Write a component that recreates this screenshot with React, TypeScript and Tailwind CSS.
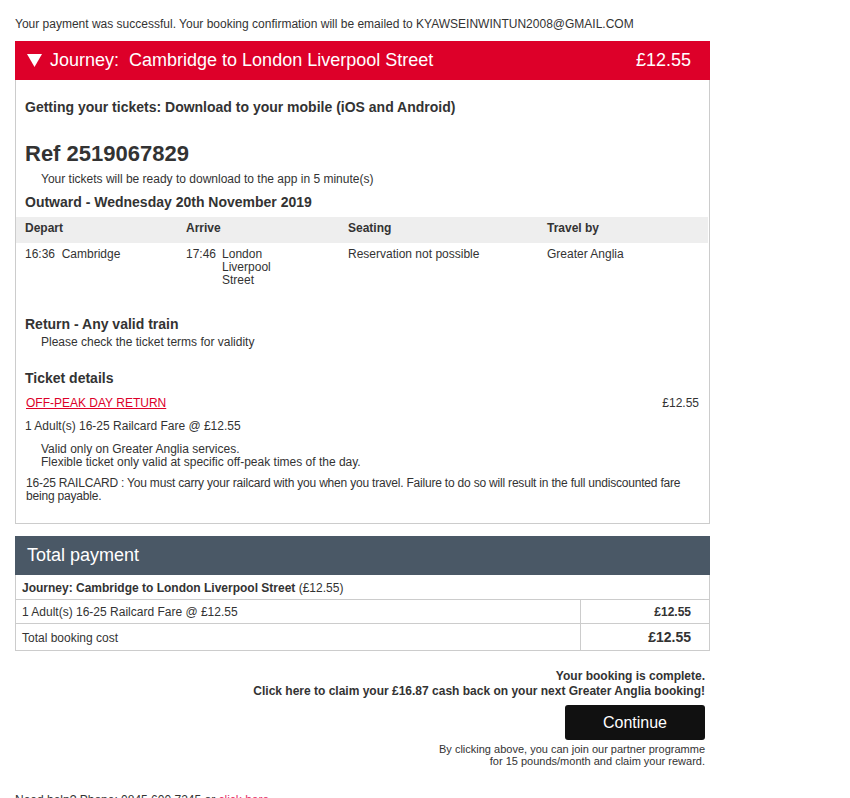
export default function App() {
  return (
    <div className="min-h-[798px] bg-white font-['Liberation_Sans',Arial,sans-serif] text-[#333] pl-[15px] w-[710px]">
      {/* Success notice */}
      <p className="pt-[17px] text-[12px] leading-[14px]">
        Your payment was successful. Your booking confirmation will be emailed to KYAWSEINWINTUN2008@GMAIL.COM
      </p>

      {/* Journey card */}
      <div className="mt-[10px] w-[695px]">
        <div className="h-[39px] bg-[#dd0029] text-white flex items-center justify-between pl-[12px] pr-[19px]">
          <div className="flex items-center gap-[8px]">
            <svg width="15" height="13" viewBox="0 0 15 13">
              <polygon points="0,0 15,0 7.5,13" fill="#fff" />
            </svg>
            <span className="text-[18px]">Journey:&nbsp; Cambridge to London Liverpool Street</span>
          </div>
          <span className="text-[18px]">£12.55</span>
        </div>

        <div className="border border-t-0 border-[#ccc] pb-[20px]">
          <div className="px-[9px]">
            <h3 className="pt-[19px] text-[14px] font-bold leading-[16px]">
              Getting your tickets: Download to your mobile (iOS and Android)
            </h3>
            <h2 className="mt-[26px] text-[22px] font-bold leading-[26px]">Ref 2519067829</h2>
            <p className="mt-[5px] pl-[16px] text-[12px] leading-[14px]">
              Your tickets will be ready to download to the app in 5 minute(s)
            </p>
            <h3 className="mt-[8px] text-[14px] font-bold leading-[16px]">Outward - Wednesday 20th November 2019</h3>
          </div>

          <div className="mt-[7px] mr-[1px]">
            <div className="grid grid-cols-[161px_162px_199px_1fr] bg-[#eee] h-[26px] pt-[4px] pl-[9px] text-[12px] leading-[14px] font-bold">
              <span>Depart</span>
              <span>Arrive</span>
              <span>Seating</span>
              <span>Travel by</span>
            </div>
            <div className="grid grid-cols-[161px_162px_199px_1fr] pl-[9px] pt-[5px] text-[12px] leading-[13px]">
              <span>16:36&nbsp; Cambridge</span>
              <div className="flex gap-[6px]">
                <span>17:46</span>
                <span>
                  London
                  <br />
                  Liverpool
                  <br />
                  Street
                </span>
              </div>
              <span>Reservation not possible</span>
              <span>Greater Anglia</span>
            </div>
          </div>

          <div className="px-[9px]">
            <h3 className="mt-[29px] text-[14px] font-bold leading-[16px]">Return - Any valid train</h3>
            <p className="mt-[3px] pl-[16px] text-[12px] leading-[14px]">Please check the ticket terms for validity</p>

            <h3 className="mt-[21px] text-[14px] font-bold leading-[16px]">Ticket details</h3>
            <div className="mt-[10px] flex justify-between text-[12px] leading-[14px]">
              <a className="pl-[1px] text-[#dd0029] underline">OFF-PEAK DAY RETURN</a>
              <span className="pr-[1px]">£12.55</span>
            </div>
            <p className="mt-[9px] text-[12px] leading-[14px]">1 Adult(s) 16-25 Railcard Fare @ £12.55</p>
            <p className="mt-[10px] pl-[16px] text-[12px] leading-[13px]">
              Valid only on Greater Anglia services.
              <br />
              Flexible ticket only valid at specific off-peak times of the day.
            </p>
            <p className="mt-[8px] pl-[1px] text-[12px] leading-[13px] tracking-[-0.2px]">
              16-25 RAILCARD : You must carry your railcard with you when you travel. Failure to do so will result in the full undiscounted fare being payable.
            </p>
          </div>
        </div>
      </div>

      {/* Total payment */}
      <div className="mt-[12px] w-[695px]">
        <div className="h-[39px] bg-[#4a5866] text-white flex items-center pl-[12px] text-[18px]">Total payment</div>
        <div className="border border-t-0 border-[#ccc] text-[12px]">
          <div className="h-[25px] flex items-center pl-[6px] pt-[1px] border-b border-[#ccc]">
            <span className="font-bold">Journey: Cambridge to London Liverpool Street</span>&nbsp;(£12.55)
          </div>
          <div className="h-[24px] grid grid-cols-[564px_1fr] border-b border-[#ccc]">
            <span className="flex items-center pl-[6px] pt-[1px]">1 Adult(s) 16-25 Railcard Fare @ £12.55</span>
            <span className="flex items-center justify-end pr-[18px] pt-[1px] border-l border-[#ccc] font-bold">£12.55</span>
          </div>
          <div className="h-[26px] grid grid-cols-[564px_1fr]">
            <span className="flex items-center pl-[6px] pt-[1px]">Total booking cost</span>
            <span className="flex items-center justify-end pr-[18px] pt-[1px] border-l border-[#ccc] text-[14px] font-bold">£12.55</span>
          </div>
        </div>
      </div>

      {/* Completion */}
      <div className="mt-[18px] w-[690px] flex flex-col items-end text-right">
        <p className="text-[12px] font-bold leading-[15px]">
          Your booking is complete.
          <br />
          Click here to claim your £16.87 cash back on your next Greater Anglia booking!
        </p>
        <button className="mt-[6px] w-[140px] h-[35px] rounded-[3px] bg-[#111] text-white text-[16px]">Continue</button>
        <p className="mt-[3px] text-[11px] leading-[12px]">
          By clicking above, you can join our partner programme
          <br />
          for 15 pounds/month and claim your reward.
        </p>
      </div>

      <p className="mt-[26px] text-[12px] leading-[14px]">
        Need help? Phone: 0845 600 7245 or <span className="text-[#e8336b]">click here</span>
      </p>
    </div>
  );
}
